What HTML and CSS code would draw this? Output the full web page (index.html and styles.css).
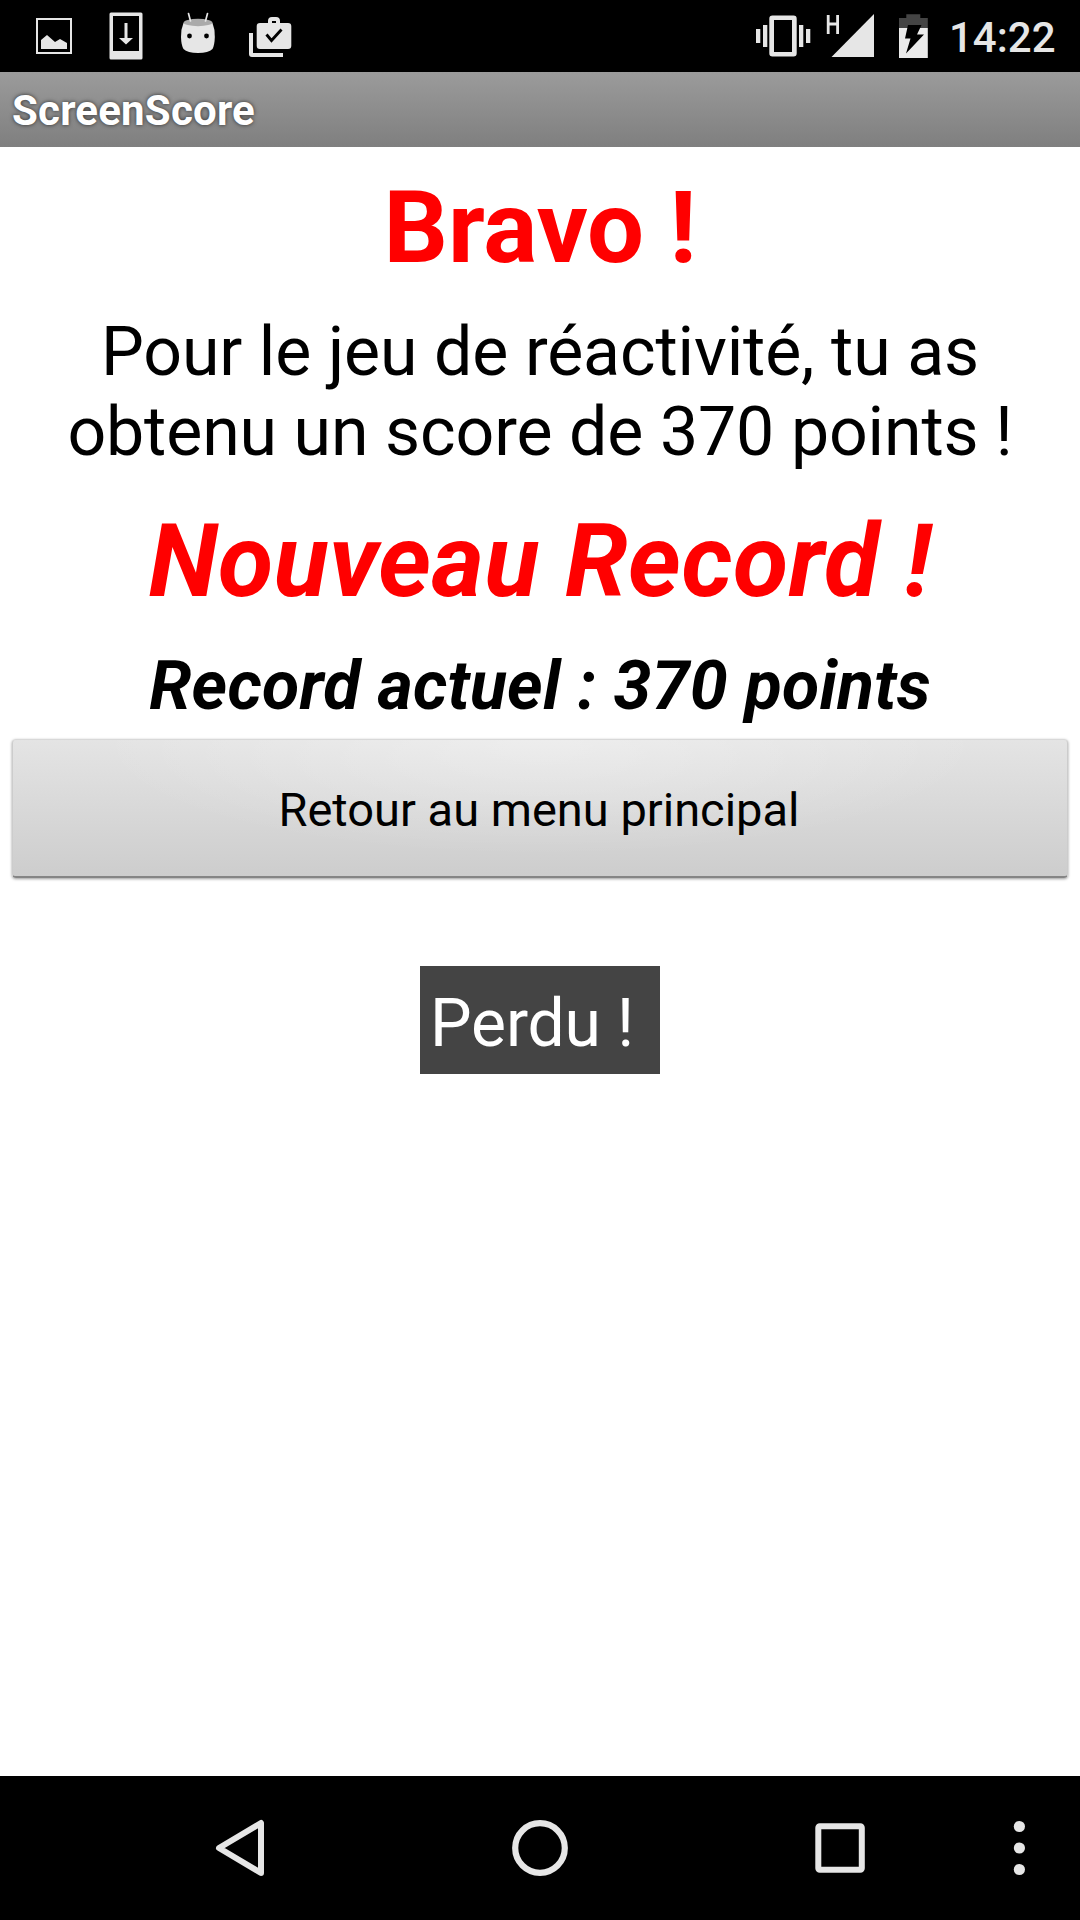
FILE: index.html
```html
<!DOCTYPE html>
<html lang="fr">
<head>
  <meta charset="UTF-8" />
  <meta name="viewport" content="width=device-width, initial-scale=1.0" />
  <title>ScreenScore</title>
  <link rel="stylesheet" href="styles.css">
</head>
<body>

<div class="status-bar">
  <div class="status-icons">
    <!-- Picture -->
    <svg class="icon" viewBox="18 0 72 72">
      <rect x="37" y="19" width="34" height="34" fill="none" stroke="#e6e6e6" stroke-width="2"/>
      <path fill="#e6e6e6" d="M41 40l6-5 8 7 5-3 7 4v6H41z"/>
    </svg>
    <!-- Download -->
    <svg class="icon" viewBox="90 0 72 72">
      <path fill="#e6e6e6" fill-rule="evenodd" d="M111 12.500h30q1.500 0 1.500 1.500v44q0 1.500-1.500 1.500h-30q-1.500 0-1.500-1.500V14q0-1.500 1.500-1.500zM113 16v35h26V16z"/>
      <path fill="#e6e6e6" d="M124.500 23h3v15h5.500l-7 6.500-7-6.500h5.500z"/>
    </svg>
    <!-- Robot head -->
    <svg class="icon" viewBox="162 0 72 72">
      <path fill="#e6e6e6" d="M183.500 23h29q2.500 6 2.300 14-.2 8-2.300 12-4 4-14.500 4t-14.500-4q-2.300-4-2.500-12-.1-8 2.500-14z"/>
      <ellipse cx="198" cy="22.500" rx="14.500" ry="3.700" fill="#aaa"/>
      <path stroke="#e6e6e6" stroke-width="1.700" stroke-linecap="round" d="M188.500 13.500l2 7.500M207.500 13.500l-2 7.500"/>
      <circle cx="189.500" cy="36" r="2.400"/>
      <circle cx="206.500" cy="36" r="2.400"/>
    </svg>
    <!-- Bag -->
    <svg class="icon" viewBox="234 0 72 72">
      <path fill="#e6e6e6" d="M249 33h4v20h30v4h-31q-3 0-3-3z"/>
      <path fill="#e6e6e6" fill-rule="evenodd" d="M268 23v-2q0-4 4-4h4q4 0 4 4v2h8q3.300 0 3.300 3.300v19.400q0 3.300-3.300 3.300h-28q-3.300 0-3.300-3.300V26.300q0-3.300 3.300-3.300zm4 0h4v-2h-4z"/>
      <path fill="none" stroke="#000" stroke-width="2.800" d="M266.500 34.500l5 6 10-11"/>
    </svg>
  </div>
  <div class="status-system">
    <!-- Vibrate -->
    <svg class="icon" viewBox="747 0 72 72">
      <path fill="#e6e6e6" d="M756 29h4.300v14H756zM763 25h4.300v22H763zM799 25h4.300v22H799zM806 29h4.300v14H806z"/>
      <path fill="#e6e6e6" fill-rule="evenodd" d="M772.500 15.500h21q3.200 0 3.200 3.200v34.600q0 3.200-3.200 3.200h-21q-3.200 0-3.200-3.200V18.700q0-3.200 3.200-3.200zM774 20v32h18V20z"/>
    </svg>
    <!-- Signal -->
    <svg class="icon" viewBox="819 0 72 72">
      <path stroke="#e6e6e6" stroke-width="2.800" d="M828.200 15v19M837.600 15v19M828.200 24h9.400"/>
      <path fill="#e6e6e6" d="M874 14v43h-42.500z"/>
    </svg>
    <!-- Battery -->
    <svg class="icon battery" viewBox="891 0 48 72">
      <path fill="#444" d="M899 18h7.300v-3.700h14V18h7.500v10H899z"/>
      <path fill="#ebebeb" d="M899 28h28.800v30H899z"/>
      <path d="M908 25h13.500l-4.500 9.500h7L906 53.500l4.500-15h-5.500z"/>
    </svg>
    <span class="clock">14:22</span>
  </div>
</div>

<div class="title-bar">ScreenScore</div>

<main class="content">
  <h1 class="bravo">Bravo !</h1>
  <p class="score">Pour le jeu de réactivité, tu as<br>obtenu un score de 370 points !</p>
  <h2 class="new-record">Nouveau Record !</h2>
  <p class="record">Record actuel : 370 points</p>
  <button class="menu-button">Retour au menu principal</button>
  <div class="toast">Perdu !</div>
</main>

<nav class="nav-bar">
  <svg class="nav-icon" viewBox="0 0 72 72">
    <path fill="none" stroke="#e6e6e6" stroke-width="6" stroke-linejoin="round" d="M15 36L57 11v50z"/>
  </svg>
  <svg class="nav-icon" viewBox="0 0 72 72">
    <circle cx="36" cy="36" r="24.800" fill="none" stroke="#e6e6e6" stroke-width="6.200"/>
  </svg>
  <svg class="nav-icon" viewBox="0 0 72 72">
    <rect x="14.300" y="14.300" width="43.500" height="43.500" rx="1.500" fill="none" stroke="#e6e6e6" stroke-width="6"/>
  </svg>
  <svg class="nav-icon overflow" viewBox="0 0 24 72">
    <g fill="#e6e6e6">
      <circle cx="12.400" cy="14.500" r="5.600"/>
      <circle cx="12.400" cy="36" r="5.600"/>
      <circle cx="12.400" cy="57.500" r="5.600"/>
    </g>
  </svg>
</nav>

</body>
</html>
```
FILE: styles.css
```css
* {
  margin: 0;
  padding: 0;
  box-sizing: border-box;
}

body {
  display: flex;
  flex-direction: column;
  height: 1920px;
  font-family: Roboto, sans-serif;
  background: #fff;
  color: #000;
  overflow: hidden;
}

/* Status bar */
.status-bar {
  display: flex;
  justify-content: space-between;
  height: 72px;
  padding: 0 24px 0 18px;
  background: #000;
}

.status-icons,
.status-system {
  display: flex;
}

.icon {
  width: 72px;
  height: 72px;
}

.icon.battery {
  width: 48px;
}

.clock {
  width: 117px;
  padding-left: 10px;
  font-size: 42px;
  font-weight: 500;
  line-height: 76px;
  white-space: nowrap;
  color: #e6e6e6;
}

.title-bar {
  height: 75px;
  padding-left: 12px;
  background: linear-gradient(#9b9b9b, #7f7f7f);
  font-size: 42px;
  font-weight: 700;
  line-height: 77px;
  letter-spacing: 0.2px;
  color: #fff;
  text-shadow: 0 0 4px rgba(0, 0, 0, 0.7);
}

/* Score */
.content {
  flex: 1;
  display: flex;
  flex-direction: column;
  align-items: center;
  padding-top: 22px;
  text-align: center;
  white-space: nowrap;
}

.bravo,
.new-record {
  font-size: 101px;
  font-weight: 700;
  line-height: 118px;
  color: #f00;
}

.score {
  margin: 25px 0 31px;
  font-size: 68px;
  line-height: 80px;
  letter-spacing: -0.14px;
}

.new-record,
.record {
  font-style: italic;
}

.new-record {
  letter-spacing: 0.4px;
}

.record {
  margin-top: 25px;
  font-size: 68px;
  font-weight: 700;
  line-height: 80px;
  letter-spacing: 0.2px;
}

.menu-button {
  width: 1056px;
  height: 139px;
  margin-top: 13px;
  padding: 2px 2px 0 0;
  border: 1px solid #ccc;
  border-top-color: #d8d8d8;
  border-bottom: 2px solid #858585;
  border-radius: 4px;
  background: radial-gradient(ellipse at 50% 0, rgba(255, 255, 255, 0.35), transparent 60%), linear-gradient(#e4e4e4, #cdcdcd);
  box-shadow: 0 1px 3px rgba(0, 0, 0, 0.4);
  font-family: inherit;
  font-size: 47px;
  color: #000;
}

.toast {
  width: 240px;
  height: 108px;
  margin-top: 88px;
  padding-left: 10px;
  background: #444;
  font-size: 66px;
  line-height: 116px;
  letter-spacing: -0.15px;
  text-align: left;
  color: #fff;
}

/* Navigation bar */
.nav-bar {
  display: flex;
  align-items: center;
  gap: 228px;
  height: 144px;
  padding-left: 204px;
  background: #000;
}

.nav-icon {
  flex: none;
  width: 72px;
  height: 72px;
}

.nav-icon.overflow {
  width: 24px;
  margin-left: -97px;
}
```
